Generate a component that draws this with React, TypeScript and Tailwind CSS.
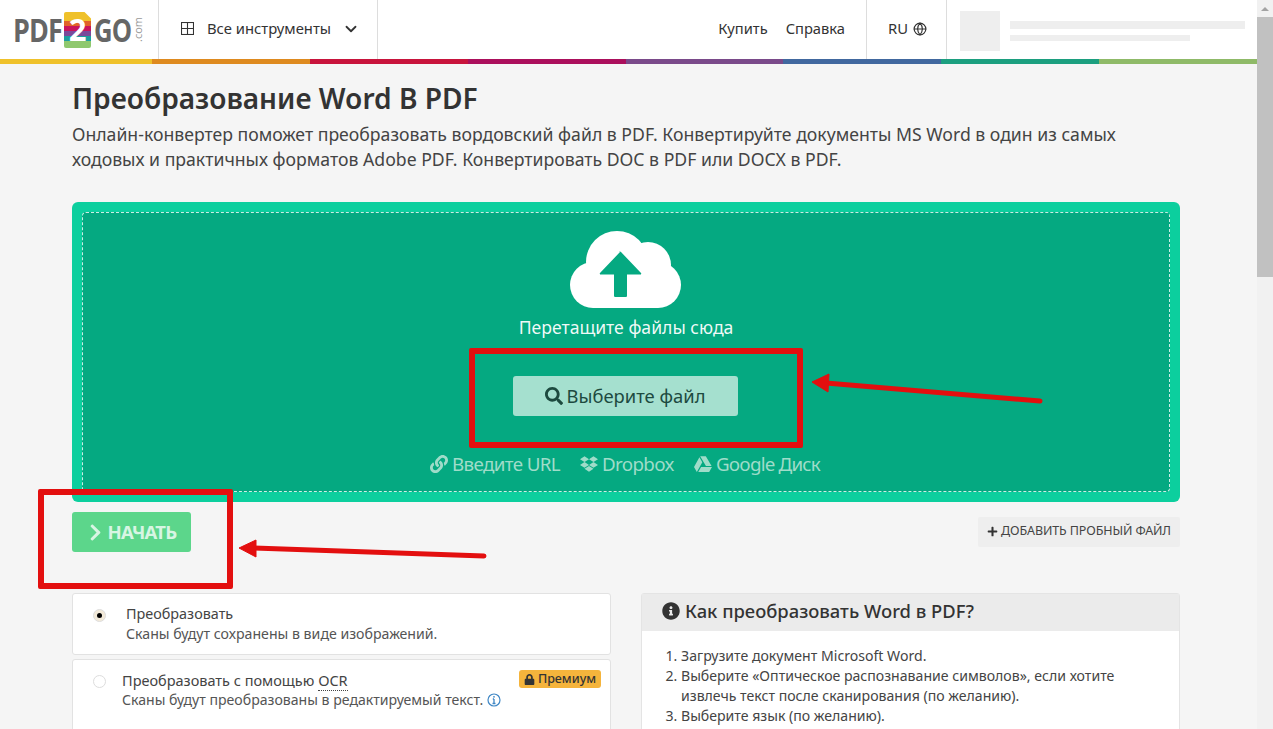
import { ChevronDown, Globe } from 'lucide-react'
import { FaChevronRight, FaDropbox, FaGoogleDrive, FaInfoCircle, FaLink, FaLock, FaPlus, FaSearch } from 'react-icons/fa'

const SANS = "font-['Noto_Sans','Open_Sans',sans-serif]"

const BAR = [
  'w-[152px] bg-[#efc12a]',
  'w-[158px] bg-[#de8a1f]',
  'w-[158px] bg-[#c8143c]',
  'w-[158px] bg-[#ab0f5c]',
  'w-[157px] bg-[#7a4a8a]',
  'w-[158px] bg-[#41689f]',
  'w-[158px] bg-[#1c9f7f]',
  'w-[158px] bg-[#8fba68]',
]

function Logo() {
  return (
    <div className="flex items-center w-[158px] pl-[13px] text-[#666] font-['Open_Sans'] font-bold">
      <span className="w-[51px] text-[32px] tracking-[-1px] leading-none origin-left scale-x-[0.84]">PDF</span>
      <div className="relative w-[27px] h-[36px]">
        <div className="h-full rounded-[2px] overflow-hidden flex flex-col">
          <div className="h-[9px] bg-[#efc12a]" />
          <div className="h-[5px] bg-[#e0632a]" />
          <div className="h-[5px] bg-[#c8145c]" />
          <div className="h-[5px] bg-[#7a4a9a]" />
          <div className="h-[5px] bg-[#1c9f9f]" />
          <div className="h-[7px] bg-[#8fc86e]" />
        </div>
        <div className="absolute right-0 top-0 w-[7px] h-[7px] bg-white [clip-path:polygon(0_0,100%_0,100%_100%)]" />
        <span className="absolute inset-0 flex items-center justify-center text-white text-[31px] leading-none">2</span>
      </div>
      <span className="w-[38px] ml-[3px] text-[32px] tracking-[-1px] leading-none origin-left scale-x-[0.8]">GO</span>
      <span className="text-[11px] font-normal text-[#999] leading-none [writing-mode:vertical-lr] rotate-180">.com</span>
    </div>
  )
}

function Header() {
  return (
    <header className="flex h-[59px] bg-white text-[#333]">
      <Logo />
      <div className="flex items-center w-[220px] pl-[22px] pb-[2px] border-x border-[#ddd] text-[14.8px]">
        <svg width="13" height="13" viewBox="0 0 13 13" fill="none" stroke="#333" strokeWidth="1.1">
          <rect x="0.5" y="0.5" width="12" height="12" />
          <path d="M6.5 0.5v12M0.5 6.5h12" />
        </svg>
        <span className="ml-[13px]">Все инструменты</span>
        <ChevronDown size={18} strokeWidth={2.4} className="ml-[11px]" />
      </div>
      <div className="flex-1 flex items-center justify-end gap-[18px] pr-[21px] pb-[2px] text-[14.7px]">
        <span>Купить</span>
        <span>Справка</span>
      </div>
      <div className="flex items-center pl-[21px] pb-[2px] gap-[5px] w-[81px] border-x border-[#ddd] text-[14.8px]">
        <span>RU</span>
        <Globe size={14} />
      </div>
      <div className="flex items-center w-[310px] pl-[13px]">
        <div className="mt-[3px] w-[40px] h-[40px] bg-[#eee]" />
        <div className="ml-[10px] mt-[3px]">
          <div className="w-[235px] h-[8px] bg-[#eee]" />
          <div className="w-[180px] h-[6px] bg-[#eee] mt-[6px]" />
        </div>
      </div>
    </header>
  )
}

function Cloud() {
  return (
    <svg width="112" height="78" viewBox="0 0 112 78" className="block">
      <g fill="#fff">
        <circle cx="47" cy="31" r="31" />
        <circle cx="78" cy="34" r="23" />
        <circle cx="23" cy="54" r="23" />
        <circle cx="88" cy="54" r="23" />
        <rect x="23" y="30" width="65" height="47" />
      </g>
      <path fill="#05a981" d="M50 21l-20 21c-.6.8 0 1.5 1 1.5h13v21c0 1 .7 1.5 1.500 1.500h10c1 0 1.500-.5 1.500-1.500v-21h13c1 0 1.600-.7 1-1.500l-20-21c-.6-.7-1.400-.7-2 0z" />
    </svg>
  )
}

function Dropzone() {
  return (
    <div className="bg-[#0ccf9e] rounded-[6px] p-[10px]">
      <div className="h-[280px] bg-[#05a981] rounded-[4px] border border-dashed border-white/80 flex flex-col items-center pt-[18px]">
        <Cloud />
        <div className="mt-[6px] text-[17.6px] leading-[24px] text-white/95">Перетащите файлы сюда</div>
        <div className="mt-[37px] mr-[2px] w-[225px] h-[40px] rounded-[3px] bg-[#a5e0cf] text-[#1d4a3f] flex items-center justify-center gap-[4px] text-[18.4px]">
          <FaSearch size={18} />
          <span>Выберите файл</span>
        </div>
        <div className="mt-[34px] mr-[2px] flex items-center gap-[20px] text-[18.8px] tracking-[-0.65px] text-[#9fdcc9]">
          <span className="flex items-center gap-[4px]"><FaLink size={18} />Введите URL</span>
          <span className="flex items-center gap-[4px]"><FaDropbox size={18} />Dropbox</span>
          <span className="flex items-center gap-[4px] tracking-[-0.8px]"><FaGoogleDrive size={18} />Google Диск</span>
        </div>
      </div>
    </div>
  )
}

function Actions() {
  return (
    <div className="flex items-start justify-between mt-[10px] h-[81px]">
      <div className="w-[119px] h-[40px] rounded-[3px] bg-[#5cd68b] text-[#d8f5e3] flex items-center justify-center gap-[2px] text-[18.5px] font-bold tracking-[-0.7px]">
        <FaChevronRight size={19} />
        <span>НАЧАТЬ</span>
      </div>
      <div className="mt-[5px] pb-[1px] w-[202px] h-[30px] rounded-[2px] bg-[#eee] text-[#444] flex items-center justify-center gap-[3px] text-[12.5px] tracking-[-0.1px]">
        <FaPlus size={11} className="text-[#333]" />
        <span>ДОБАВИТЬ ПРОБНЫЙ ФАЙЛ</span>
      </div>
    </div>
  )
}

function Options() {
  return (
    <div className="w-[539px] flex flex-col gap-[4px]">
      <div className="h-[62px] bg-white border border-[#e2e2e2] rounded-[3px] flex pl-[20px] pt-[10px] leading-[20px] text-[#444]">
        <span className="mt-[5px] w-[13px] h-[13px] rounded-full bg-[#f3ead9] border border-[#ddd] flex items-center justify-center">
          <span className="w-[5px] h-[5px] rounded-full bg-black" />
        </span>
        <div className="ml-[20px]">
          <div className="text-[14.4px]">Преобразовать</div>
          <div className="text-[14.15px] text-[#555]">Сканы будут сохранены в виде изображений.</div>
        </div>
      </div>
      <div className="relative h-[90px] bg-white border border-[#e2e2e2] rounded-[3px] flex pl-[20px] pt-[10px] leading-[20px] text-[#444]">
        <span className="mt-[5px] w-[13px] h-[13px] rounded-full bg-white border border-[#ddd]" />
        <div className="ml-[16px]">
          <div className="text-[14.5px]">
            Преобразовать с помощью <span className="border-b border-dotted border-[#444]">OCR</span>
          </div>
          <div className="flex items-center gap-[4px] text-[14.1px] text-[#555]">
            Сканы будут преобразованы в редактируемый текст.
            <svg width="14" height="14" viewBox="0 0 14 14" fill="none" stroke="#3f87c5">
              <circle cx="7" cy="7" r="6" strokeWidth="1.200" />
              <path d="M7 6v4.500M5.500 10.500h3M5.800 6h1.200" strokeWidth="1.300" />
              <circle cx="7" cy="3.800" r="0.900" fill="#3f87c5" stroke="none" />
            </svg>
          </div>
        </div>
        <span className="absolute right-[9px] top-[10px] h-[18px] w-[82px] rounded-[3px] bg-[#f5b43c] text-[#333] flex items-center justify-center gap-[3px] text-[12.5px] font-medium">
          <FaLock size={11} />
          Премиум
        </span>
      </div>
    </div>
  )
}

function HowTo() {
  return (
    <div className="w-[539px] h-[200px] border border-[#e4e4e4] rounded-[3px] bg-white">
      <div className="h-[37px] pb-[4px] bg-[#ebebeb] flex items-center gap-[5px] pl-[20px] text-[18.4px] font-medium text-[#333]">
        <FaInfoCircle size={18} />
        <span>Как преобразовать Word в PDF?</span>
      </div>
      <ol className="list-decimal pl-[39px] pr-[50px] pt-[15px] text-[14.1px] leading-[20px] text-[#444]">
        <li>Загрузите документ Microsoft Word.</li>
        <li>Выберите «Оптическое распознавание символов», если хотите извлечь текст после сканирования (по желанию).</li>
        <li>Выберите язык (по желанию).</li>
      </ol>
    </div>
  )
}

// красные пометки поверх скриншота
function Annotations() {
  return (
    <>
      <div className="absolute left-[469px] top-[348px] w-[334px] h-[100px] border-[6px] border-[#e30f0f] rounded-[2px]" />
      <div className="absolute left-[38px] top-[489px] w-[195px] h-[100px] border-[6px] border-[#e30f0f] rounded-[2px]" />
      <svg className="absolute left-0 top-0 pointer-events-none" width="1273" height="729" fill="#e30f0f" stroke="#e30f0f">
        <path d="M826 383L1040 401" strokeWidth="5" strokeLinecap="round" />
        <path d="M812 382L829 374L828 392z" strokeWidth="1" />
        <path d="M254 548L484 556" strokeWidth="5" strokeLinecap="round" />
        <path d="M239 548L256 540L256 557z" strokeWidth="1" />
      </svg>
    </>
  )
}

export default function App() {
  return (
    <div className={`relative h-[729px] w-[1273px] overflow-hidden bg-[#f5f5f5] ${SANS}`}>
      <div className="w-[1257px]">
        <Header />
        <div className="flex h-[5px]">
          {BAR.map(c => (
            <div key={c} className={c} />
          ))}
        </div>
        <main className="w-[1108px] ml-[72px]">
          <h1 className="mt-[14px] text-[28.1px] leading-[40px] font-semibold text-[#333]">Преобразование Word В PDF</h1>
          <p className="mt-[4px] text-[17.65px] leading-[25px] text-[#444]">
            Онлайн-конвертер поможет преобразовать вордовский файл в PDF. Конвертируйте документы MS Word в один из самых ходовых и практичных форматов Adobe PDF. Конвертировать DOC в PDF или DOCX в PDF.
          </p>
          <div className="mt-[30px]">
            <Dropzone />
          </div>
          <Actions />
          <div className="flex justify-between items-start">
            <Options />
            <HowTo />
          </div>
        </main>
      </div>

      {/* полоса прокрутки */}
      <div className="absolute right-0 top-0 bottom-0 w-[16px] bg-[#f1f1f1]">
        <div className="h-[17px] flex items-center justify-center">
          <div className="w-0 h-0 border-x-[4px] border-x-transparent border-b-[4px] border-b-[#a3a3a3]" />
        </div>
        <div className="w-[16px] h-[260px] bg-[#c1c1c1]" />
      </div>

      <Annotations />
    </div>
  )
}
